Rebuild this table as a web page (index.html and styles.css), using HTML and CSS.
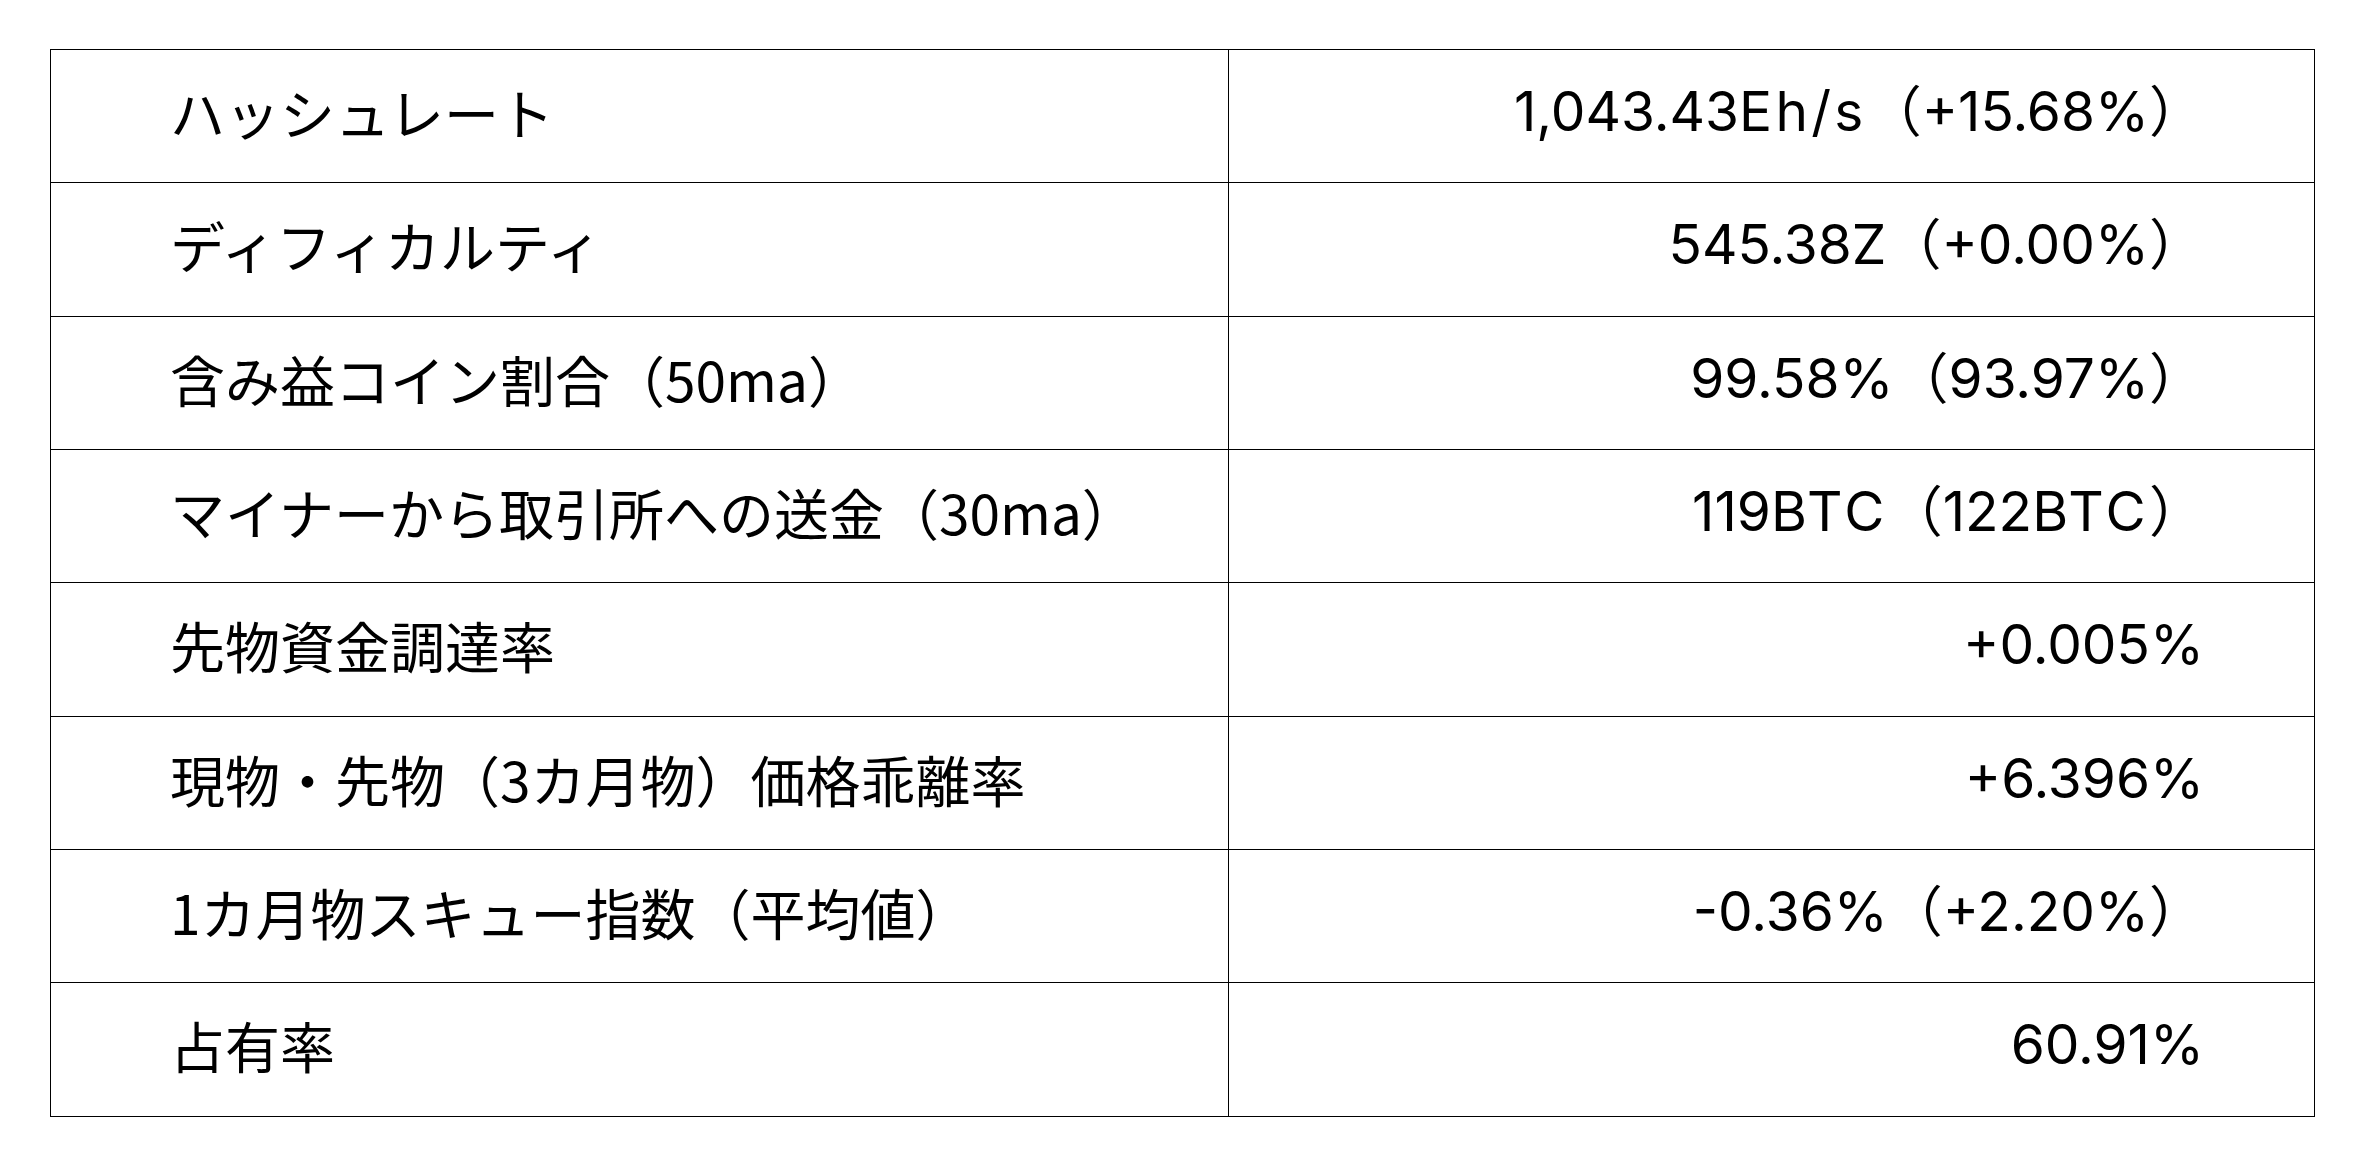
FILE: index.html
```html
<!DOCTYPE html>
<html lang="ja">
<head>
<meta charset="utf-8">
<title>指標</title>
<link rel="stylesheet" href="styles.css">
</head>
<body>
<table class="metrics">
  <colgroup><col class="col-label"><col class="col-value"></colgroup>
  <tbody>
    <tr><td class="label">ハッシュレート</td><td class="value">1,043.43<span class="unit">Eh/s</span>（+15.68%）</td></tr>
    <tr><td class="label">ディフィカルティ</td><td class="value">545.38Z（+0.00%）</td></tr>
    <tr><td class="label">含み益コイン割合（50ma）</td><td class="value">99.58%（93.97%）</td></tr>
    <tr><td class="label">マイナーから取引所への送金（30ma）</td><td class="value">119<span class="unit">BTC</span>（122<span class="unit">BTC</span>）</td></tr>
    <tr><td class="label">先物資金調達率</td><td class="value">+0.005%</td></tr>
    <tr><td class="label">現物・先物（3カ月物）価格乖離率</td><td class="value">+6.396%</td></tr>
    <tr><td class="label">1カ月物スキュー指数（平均値）</td><td class="value">-0.36%（+2.20%）</td></tr>
    <tr><td class="label">占有率</td><td class="value">60.91%</td></tr>
  </tbody>
</table>
</body>
</html>
```
FILE: styles.css
```css
html, body {
  margin: 0;
  padding: 0;
  background: #ffffff;
}
body {
  padding: 49px 0 0 50px;
  font-family: "Noto Sans CJK JP", "Noto Sans", sans-serif;
  color: #000000;
}
.metrics {
  border-collapse: collapse;
  table-layout: fixed;
  width: 2264px;
}
.col-label { width: 1178px; }
.col-value { width: 1086px; }
.metrics tr {
  height: 133.33px;
}
.metrics td {
  border: 1px solid #000000;
  font-size: 55px;
  line-height: 1.2;
  padding: 0 0 10px 0;
  vertical-align: middle;
  white-space: nowrap;
}
.label {
  padding-left: 119px !important;
  text-align: left;
}
.value {
  font-family: Inter, "Noto Sans CJK JP", sans-serif;
  font-weight: 400;
  padding-right: 110px !important;
  text-align: right;
}
.unit {
  letter-spacing: 0.06em;
}
```
